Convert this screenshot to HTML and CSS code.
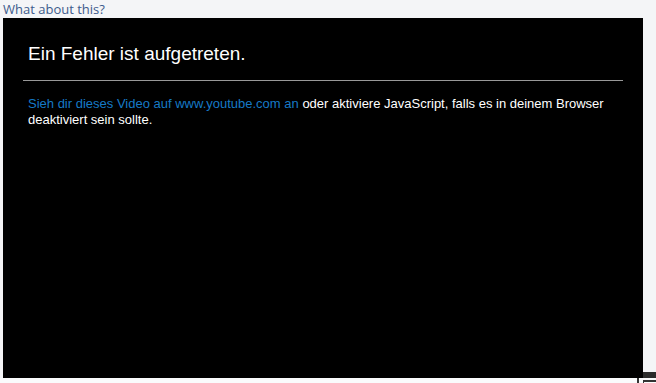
FILE: index.html
```html
<!DOCTYPE html>
<html lang="en">
<head>
  <meta charset="UTF-8">
  <title>What about this?</title>
  <meta name="viewport" content="width=device-width, initial-scale=1.0">
  <link rel="stylesheet" href="styles.css">
</head>
<body>
  <div class="question">What about this?</div>

  <div class="player">
    <div class="error-wrap">
      <div class="error-title">Ein Fehler ist aufgetreten.</div>
      <div class="error-text">
        <a href="#">Sieh dir dieses Video auf www.youtube.com an</a> oder aktiviere JavaScript, falls es in deinem Browser deaktiviert sein sollte.
      </div>
    </div>
  </div>

  <div class="below"></div>
  <div class="corner-bar"></div>
  <div class="corner-box"></div>
</body>
</html>
```

FILE: styles.css
```css
body {
  margin: 0;
  padding: 0 3px;
  background: #f4f5f7;
  font-family: "Open Sans", sans-serif;
  height: 383px;
  overflow: hidden;
  position: relative;
}
.question {
  font-size: 13px;
  line-height: 18px;
  color: #3d5b8c;
  height: 18px;
}
.player {
  width: 640px;
  height: 360px;
  background: #000;
  font-family: "Liberation Sans", Arial, sans-serif;
}
.error-wrap {
  padding: 22px 20px 0 20px;
}
.error-title {
  font-size: 19px;
  line-height: 28px;
  color: #fff;
  padding: 0 5px 12px;
  border-bottom: 1px solid #999;
}
.error-text {
  font-size: 13px;
  line-height: 16px;
  color: #fff;
  padding: 15px 5px 0;
}
.error-text a {
  color: #167ac6;
  text-decoration: none;
}
.below {
  height: 5px;
  background: #fafbfc;
  margin: 0 -3px;
}
.corner-bar {
  position: absolute;
  left: 643px;
  top: 372px;
  width: 13px;
  height: 6px;
  background: #2b2b2b;
}
.corner-box {
  position: absolute;
  left: 637px;
  top: 378px;
  width: 19px;
  height: 5px;
  border-left: 2px solid #333;
  box-sizing: border-box;
}
.corner-box::after {
  content: "";
  position: absolute;
  left: 4px;
  top: 2px;
  right: 0;
  bottom: 0;
  border-top: 2px solid #333;
  border-left: 1px solid #333;
}
```
